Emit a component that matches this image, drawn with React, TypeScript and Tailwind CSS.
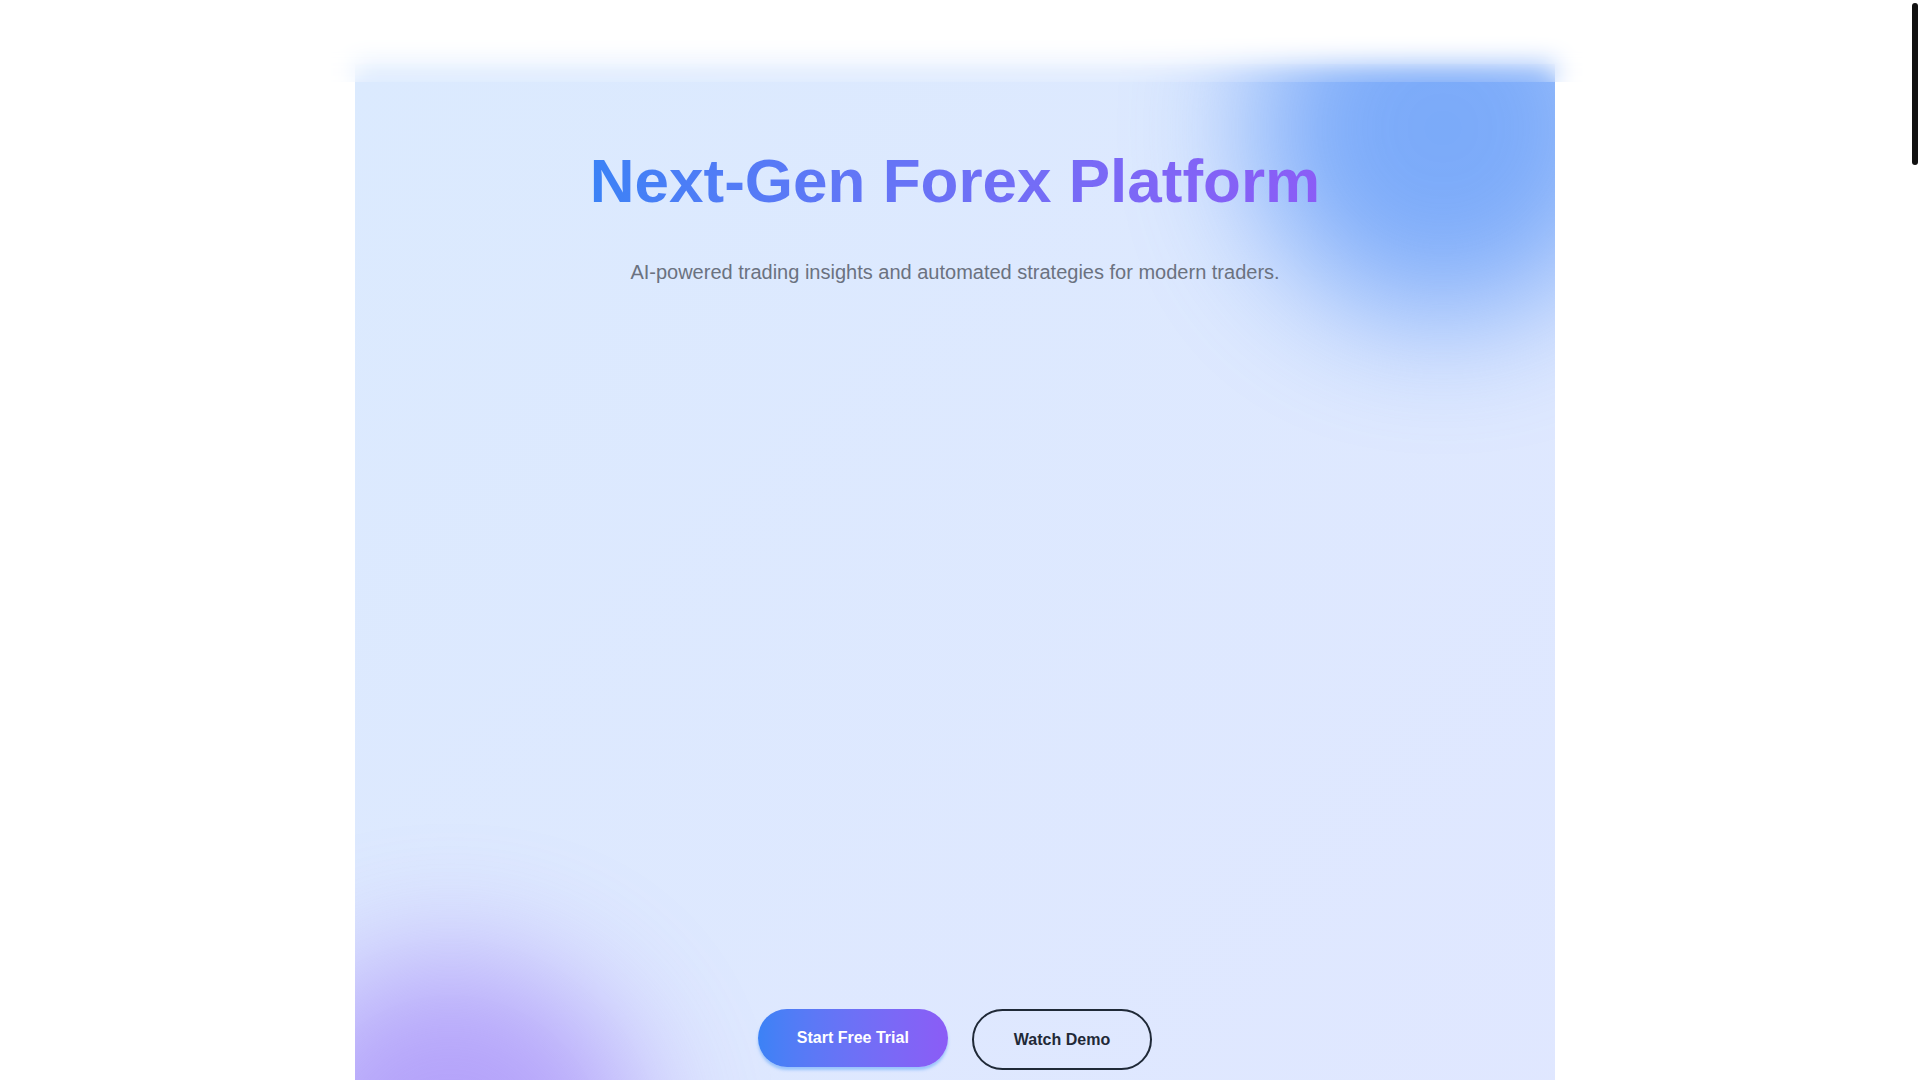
import React from 'react';

const sections = ['features', 'markets', 'pricing', 'testimonials'];

function Blobs() {
  return (
    <>
      <div className="pointer-events-none absolute -top-32 -right-20 h-96 w-96 rounded-full bg-[#3b82f6] opacity-60 blur-3xl" />
      <div className="pointer-events-none absolute -bottom-36 -left-24 h-96 w-96 rounded-full bg-[#8b5cf6] opacity-50 blur-3xl" />
    </>
  );
}

// slim dark scroll thumb in a 10px gutter, as the page shows it
function ScrollThumb() {
  return (
    <div className="fixed top-0 right-0 z-50 h-screen w-2.5 px-0.5 pt-[3px]">
      <div className="h-[162px] w-1.5 rounded-full bg-[#111111]" />
    </div>
  );
}

export default function App() {
  return (
    <div className="relative h-screen bg-white font-['Liberation_Sans',Arial,sans-serif]">
      <div className="h-full overflow-y-auto pr-2.5 [scrollbar-width:none]">
        {/* translucent top bar, blurs whatever scrolls under it */}
        <header className="fixed inset-x-0 top-0 z-40 h-[82px] bg-white/10 backdrop-blur-md" />

        <main className="pt-16">
          <section className="relative mx-auto max-w-[1200px] overflow-hidden bg-gradient-to-br from-[#dbeafe] to-[#e0e7ff] px-8 pt-[86px] pb-32">
            <Blobs />
            <div className="relative flex flex-col items-center text-center">
              <h1 className="inline-block bg-gradient-to-r from-[#3b82f6] to-[#8b5cf6] bg-clip-text text-[62px] leading-none font-bold text-transparent">
                Next-Gen Forex Platform
              </h1>
              <p className="mt-[46px] text-xl text-[#6b7280]">
                AI-powered trading insights and automated strategies for modern traders.
              </p>

              {/* chart area */}
              <div className="mt-12 h-[627px] w-full" />

              <div className="mt-12 flex items-start gap-6">
                <button className="rounded-full bg-gradient-to-r from-[#3b82f6] to-[#8b5cf6] px-[39px] py-[17px] text-base leading-6 font-bold text-white shadow-[0_3px_3px_rgba(96,165,250,0.55)]">
                  Start Free Trial
                </button>
                <button className="rounded-full border-2 border-[#1f2937] px-[40px] py-[16.5px] text-base leading-6 font-bold text-[#1f2937]">
                  Watch Demo
                </button>
              </div>
            </div>
          </section>

          {sections.map((id) => (
            <section key={id} id={id} className="mx-auto h-[1570px] max-w-[1200px]" />
          ))}
        </main>
      </div>
      <ScrollThumb />
    </div>
  );
}
